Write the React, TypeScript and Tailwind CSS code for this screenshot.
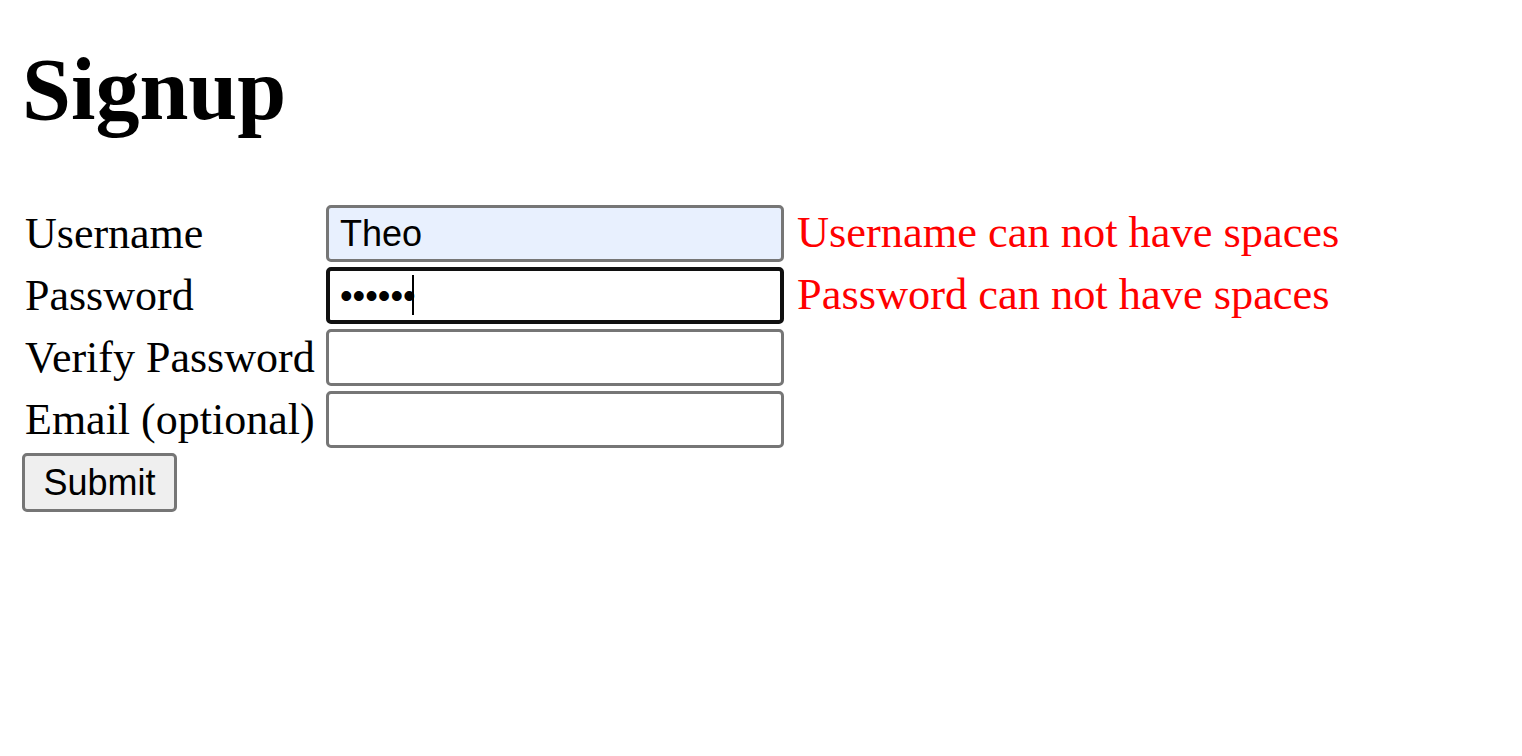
import React from 'react';

const serif = "font-['Liberation_Serif','Times_New_Roman',serif]";
const sans = "font-['Liberation_Sans',Arial,sans-serif]";

const Field = ({ label, children, error }: { label: string; children: React.ReactNode; error?: string }) => (
  <tr>
    <td className="p-px align-middle">
      <label className="block w-[296px] whitespace-nowrap">{label}</label>
    </td>
    <td className="p-px align-middle">{children}</td>
    <td className="p-px pl-[9px] pb-[5px] align-middle text-[#ff0000] text-[44.4px] whitespace-nowrap">{error}</td>
  </tr>
);

const inputBase =
  "block w-[458px] h-[57px] rounded-[5px] px-[11px] text-[36px] leading-[normal] text-black outline-none " + sans;

export default function App() {
  return (
    <div className={`min-h-screen bg-white text-black px-[22px] pt-[40px] text-[44px] leading-[normal] ${serif}`}>
      <h1 className="text-[88px] font-bold leading-[100px] mb-[64px]">Signup</h1>
      <form onSubmit={(e) => e.preventDefault()}>
        <table className="border-separate border-spacing-[3px] -ml-[1px] -mt-[3px]">
          <tbody>
            <Field label="Username" error="Username can not have spaces">
              <input
                type="text"
                defaultValue="Theo"
                className={`${inputBase} border-[3px] border-[#767676] bg-[#e8f0fe]`}
              />
            </Field>
            <Field label="Password" error="Password can not have spaces">
              <div className="relative">
                <input
                  type="password"
                  defaultValue="123456"
                  className={`${inputBase} border-[4px] border-[#101010] bg-white pl-[10px]`}
                />
                {/* caret of the focused field */}
                <span className="absolute left-[86px] top-[8px] h-[40px] w-[2px] bg-black" />
              </div>
            </Field>
            <Field label="Verify Password">
              <input type="password" className={`${inputBase} border-[3px] border-[#767676] bg-white`} />
            </Field>
            <Field label="Email (optional)">
              <input type="email" className={`${inputBase} border-[3px] border-[#767676] bg-white`} />
            </Field>
          </tbody>
        </table>
        <button
          type="submit"
          className={`mt-px block w-[155px] h-[59px] rounded-[5px] border-[3px] border-[#767676] bg-[#efefef] text-[36px] leading-[normal] text-black ${sans}`}
        >
          Submit
        </button>
      </form>
    </div>
  );
}
